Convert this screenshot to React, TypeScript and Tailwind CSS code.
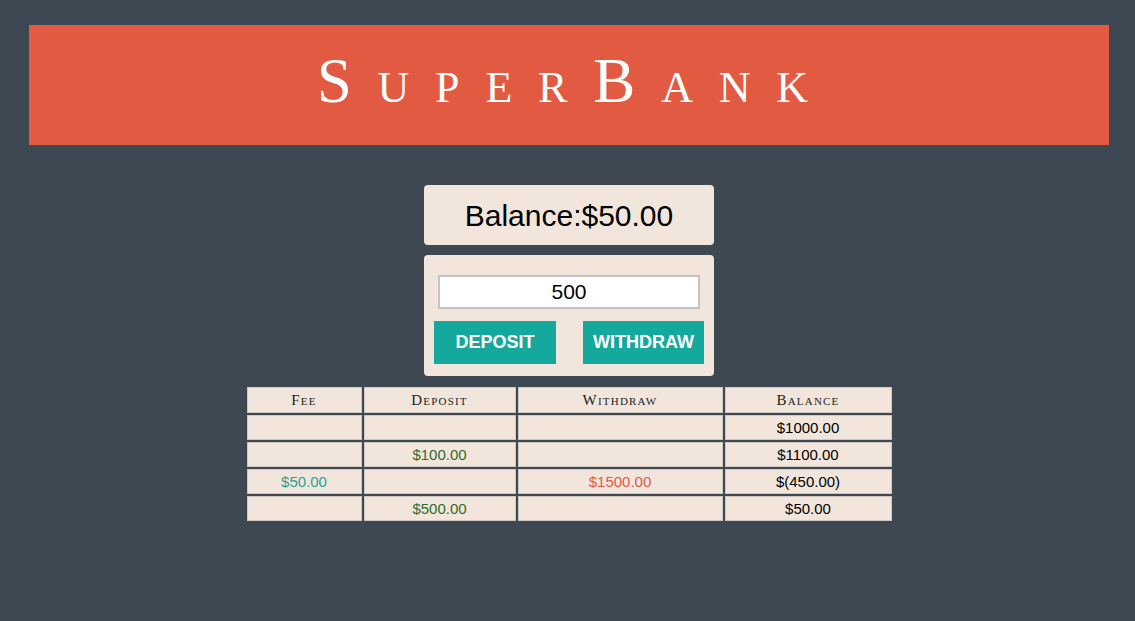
import { useState } from "react";

type Row = { fee?: string; deposit?: string; withdraw?: string; balance: string };

const rows: Row[] = [
  { balance: "$1000.00" },
  { deposit: "$100.00", balance: "$1100.00" },
  { fee: "$50.00", withdraw: "$1500.00", balance: "$(450.00)" },
  { deposit: "$500.00", balance: "$50.00" },
];

const cell = "border border-[#cfc8c0] bg-[#f2e6dc] text-center p-0 leading-none";

export default function App() {
  const [amount, setAmount] = useState("500");

  return (
    <div className="min-h-[621px] bg-[#3d4852] pt-[25px] font-['Liberation_Sans',sans-serif]">
      <div className="ml-[29px] w-[1080px] flex flex-col items-center">
        <header className="w-full h-[120px] bg-[#e25a42] flex items-center justify-center pb-[8px]">
          <h1 className="font-['Liberation_Serif',serif] text-[63px] text-white [font-variant:small-caps] tracking-[0.41em] pl-[0.2em] leading-none">
            SuperBank
          </h1>
        </header>

        <div className="mt-[40px] w-[290px] h-[60px] rounded bg-[#f2e6dc] flex items-center justify-center text-[30px] text-black">
          Balance:$50.00
        </div>

        <div className="mt-[10px] w-[290px] rounded bg-[#f2e6dc] pt-[20px] pb-[12px] px-[10px]">
          <div className="px-[4px]">
            <input
              value={amount}
              onChange={(e) => setAmount(e.target.value)}
              className="w-full h-[34px] bg-white border-2 border-[#c4c4c4] text-center text-[21px] text-black outline-none"
            />
          </div>
          <div className="mt-[12px] flex justify-between">
            <button className="w-[122px] h-[43px] bg-[#14a99c] text-white text-[18px] font-bold">
              DEPOSIT
            </button>
            <button className="w-[121px] h-[43px] bg-[#14a99c] text-white text-[18px] font-bold">
              WITHDRAW
            </button>
          </div>
        </div>

        <table className="mt-[9px] border-separate border-spacing-[2px] text-[15px]">
          <thead>
            <tr className="h-[26px] font-['Liberation_Serif',serif] [font-variant:small-caps] tracking-[0.08em] text-[#222]">
              <th className={`${cell} w-[115px] font-normal`}>Fee</th>
              <th className={`${cell} w-[152px] font-normal`}>Deposit</th>
              <th className={`${cell} w-[205px] font-normal`}>Withdraw</th>
              <th className={`${cell} w-[167px] font-normal`}>Balance</th>
            </tr>
          </thead>
          <tbody>
            {rows.map((r, i) => (
              <tr key={i} className="h-[25px]">
                <td className={`${cell} text-[#2aa198]`}>{r.fee}</td>
                <td className={`${cell} text-[#2f6b2c]`}>{r.deposit}</td>
                <td className={`${cell} text-[#e0584a]`}>{r.withdraw}</td>
                <td className={`${cell} text-black`}>{r.balance}</td>
              </tr>
            ))}
          </tbody>
        </table>
      </div>
    </div>
  );
}
